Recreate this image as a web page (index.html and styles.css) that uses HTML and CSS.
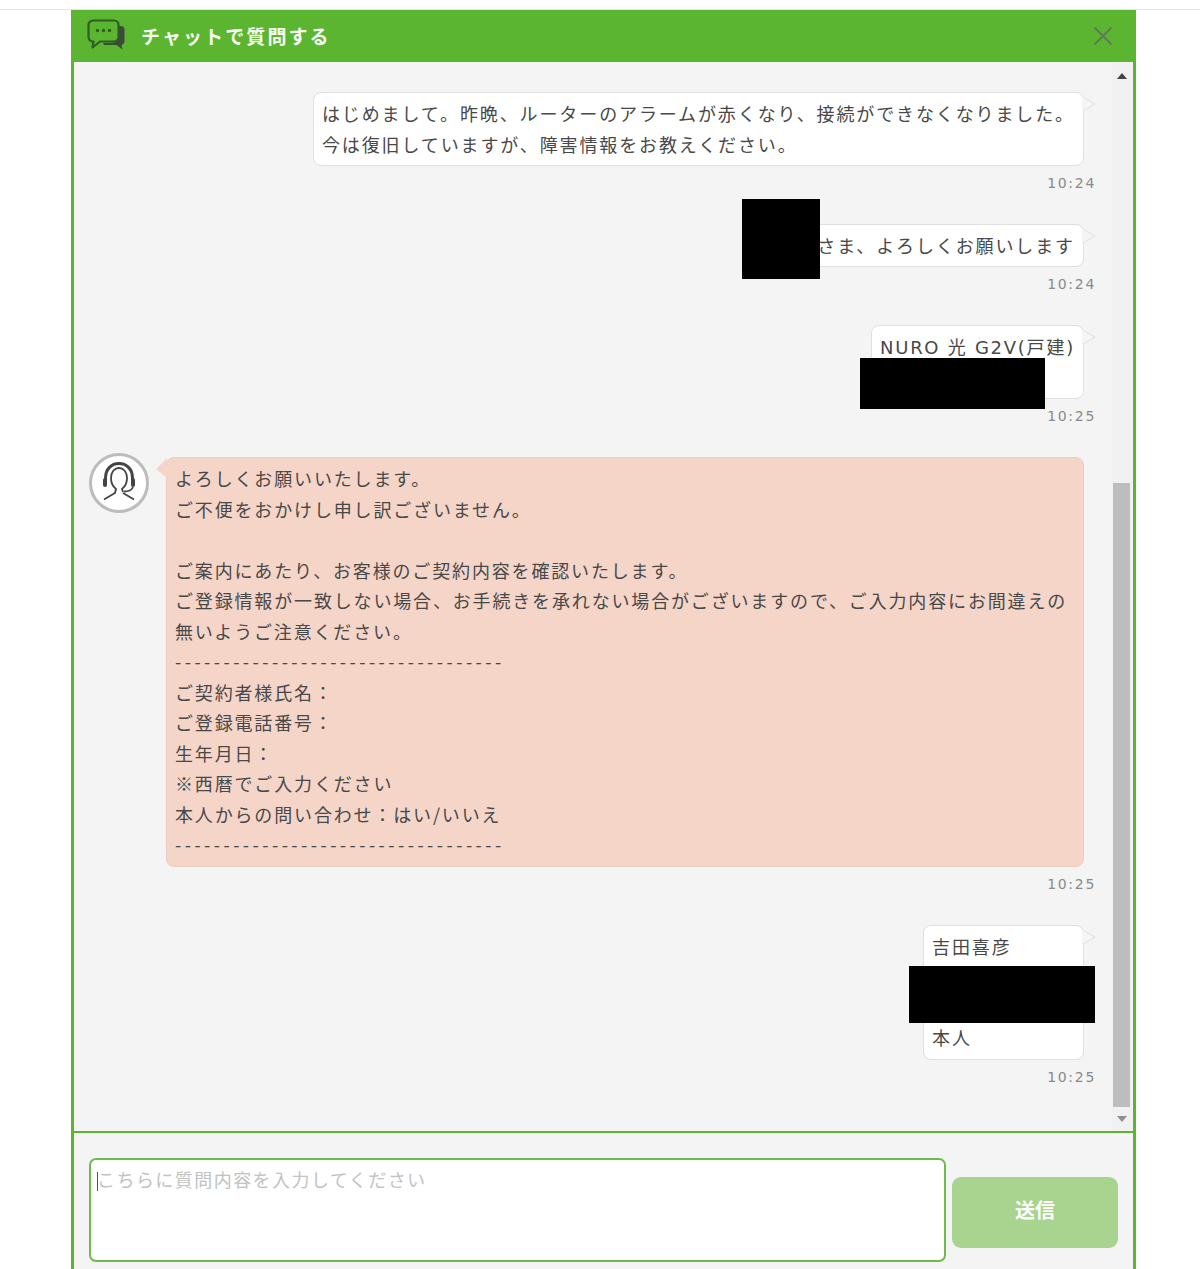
FILE: index.html
```html
<!DOCTYPE html>
<html lang="ja">
<head>
<meta charset="utf-8">
<title>チャットで質問する</title>
<link rel="stylesheet" href="styles.css">
</head>
<body>
<div class="topline"></div>
<section class="panel">
  <header class="head">
    <svg class="head-icon" viewBox="0 0 38 31" aria-hidden="true">
      <path class="chat-back" d="M27 7h6.500a4 4 0 0 1 4 4v11a4 4 0 0 1-3 3.900l1 4.600-6-4.500H17l-1-2h9a6 6 0 0 0 6-6V11a4 4 0 0 0-4-4z"/>
      <path class="chat-front" d="M6 1.500h21a4.500 4.500 0 0 1 4.500 4.500v12a4.500 4.500 0 0 1-4.500 4.500H13l-7.500 6 1-6H6A4.500 4.500 0 0 1 1.500 18V6A4.500 4.500 0 0 1 6 1.500z"/>
      <circle class="chat-dot" cx="10.500" cy="11.500" r="1.700"/>
      <circle class="chat-dot" cx="16.500" cy="11.500" r="1.700"/>
      <circle class="chat-dot" cx="22.500" cy="11.500" r="1.700"/>
    </svg>
    <h1 class="head-title">チャットで質問する</h1>
    <svg class="head-close" viewBox="0 0 20 20" aria-hidden="true">
      <path d="M1.500 1.500l17 17M18.500 1.500l-17 17"/>
    </svg>
  </header>
  <div class="main">
    <div class="chat">
      <div class="msgs">
        <div class="msg">
          <div class="bubble user">はじめまして。昨晩、ルーターのアラームが赤くなり、接続ができなくなりました。<br>今は復旧していますが、障害情報をお教えください。</div>
          <div class="time">10:24</div>
        </div>
        <div class="msg">
          <div class="bubble user bubble-name">さま、よろしくお願いします<span class="redact redact-name"></span></div>
          <div class="time">10:24</div>
        </div>
        <div class="msg">
          <div class="bubble user"><span class="latin">NURO </span>光<span class="latin"> G2V(</span>戸建<span class="latin">)</span><br>&nbsp;<span class="redact redact-plan"></span></div>
          <div class="time">10:25</div>
        </div>
        <div class="msg agent">
          <div class="agent-row">
            <div class="avatar">
              <svg viewBox="0 0 54 54" aria-hidden="true">
                <path class="av-thin" d="M19 22c0-6 3.500-10 8-10s8 4 8 10c0 5-2.500 9-5 11l1 3 M19 22c0 5 2.500 9 5 11l-1 4-11 6.500 M31 37l11 6.500"/>
                <path class="av-thick" d="M13.500 26v-4c0-9 6-14.500 13.500-14.500S40.500 13 40.500 22v4"/>
                <rect class="av-fill" x="11" y="22" width="4" height="9" rx="2"/>
                <rect class="av-fill" x="39" y="22" width="4" height="9" rx="2"/>
                <path class="av-thin" d="M41 31c-1 3-4 4.500-9 4.500"/>
              </svg>
            </div>
            <div class="bubble operator">よろしくお願いいたします。<br>ご不便をおかけし申し訳ございません。<br><br>ご案内にあたり、お客様のご契約内容を確認いたします。<br>ご登録情報が一致しない場合、お手続きを承れない場合がございますので、ご入力内容にお間違えの<br>無いようご注意ください。<br><span class="rule">----------------------------------</span><br>ご契約者様氏名：<br>ご登録電話番号：<br>生年月日：<br>※西暦でご入力ください<br>本人からの問い合わせ：はい/いいえ<br><span class="rule">----------------------------------</span></div>
          </div>
          <div class="time">10:25</div>
        </div>
        <div class="msg">
          <div class="bubble user bubble-form">吉田喜彦<br>&nbsp;<br>&nbsp;<br>本人<span class="redact redact-form"></span></div>
          <div class="time">10:25</div>
        </div>
      </div>
      <div class="scrollbar">
        <span class="arrow-up"></span>
        <span class="thumb"></span>
        <span class="arrow-down"></span>
      </div>
    </div>
    <div class="composer">
      <div class="input"><span class="caret"></span>こちらに質問内容を入力してください</div>
      <div class="send">送信</div>
    </div>
  </div>
</section>
</body>
</html>
```
FILE: styles.css
```css
* { box-sizing: border-box; }
html, body { margin: 0; height: 1269px; overflow: hidden; background: #fff; }
body {
  font-family: "Noto Sans CJK JP", "Noto Sans", sans-serif;
  color: #484848;
}
.topline { height: 10px; border-bottom: 1px solid #e4e4e4; }

.panel { width: 1065px; margin-left: 71px; }
.head {
  height: 52px;
  background: #5cb531;
  display: flex;
  align-items: center;
  padding: 0 23px 0 16px;
}
.head-icon { width: 38px; height: 31px; margin-top: -3px; flex: none; }
.chat-back { fill: #3c4a38; }
.chat-front { fill: #5cb531; stroke: #2f5c28; stroke-width: 2.200; stroke-linejoin: round; }
.chat-dot { fill: #2f5c28; }
.head-title {
  margin: 0 0 0 16px;
  flex: 1;
  font-size: 19px;
  line-height: 52px;
  font-weight: 700;
  letter-spacing: 2.100px;
  color: #f6fbef;
}
.head-close { width: 20px; height: 20px; flex: none; margin-top: -1px; }
.head-close path { fill: none; stroke: #5f7a55; stroke-width: 2; }

.main {
  height: 1207px;
  background: #f4f4f4;
  border-left: 3px solid #5cb531;
  border-right: 3px solid #5cb531;
}
.chat { display: flex; height: 1069px; }
.msgs { flex: 1; min-width: 0; padding: 30px 17px 0 15px; }
.msg { display: flex; flex-direction: column; align-items: flex-end; margin-bottom: 31.900px; }

.bubble {
  position: relative;
  font-size: 18px;
  line-height: 30.500px;
  letter-spacing: 1.880px;
  border-radius: 8px;
  padding: 5px 8px 6px;
  margin-right: 11px;
  white-space: nowrap;
}
.latin { font-family: "DejaVu Sans", sans-serif; line-height: 1; letter-spacing: 1.700px; }
.rule { letter-spacing: 3.450px; }
.user { background: #fff; border: 1px solid #e0e0e0; }
.user::before, .user::after {
  content: "";
  position: absolute;
  top: 4px;
  width: 0;
  height: 0;
  border-style: solid;
  border-color: transparent;
  border-width: 7px 0 7px 12px;
}
.user::before { right: -13px; border-left-color: #e2e2e2; }
.user::after { right: -11px; border-left-color: #f5f5f6; }
.bubble-name { width: 304px; text-align: right; }
.bubble-form { width: 161px; }

.operator {
  flex: 1;
  background: #f5d5c8;
  border: 1px solid #ebcdc0;
  letter-spacing: 1.840px;
}
.operator::before {
  content: "";
  position: absolute;
  left: -11px;
  top: 0;
  width: 0;
  height: 0;
  border-style: solid;
  border-color: transparent #f5d5c8 transparent transparent;
  border-width: 11px 11px 9px 0;
}
.agent { align-items: stretch; }
.agent .time { align-self: flex-end; }
.agent-row { display: flex; align-items: flex-start; }
.avatar {
  width: 60px;
  height: 60px;
  margin: -4px 17px 0 0;
  flex: none;
  border-radius: 50%;
  border: 3px solid #bcbcbc;
  background: #fff;
}
.avatar svg { display: block; width: 54px; height: 54px; }
.av-thin { fill: none; stroke: #444; stroke-width: 1.800; }
.av-thick { fill: none; stroke: #444; stroke-width: 3; }
.av-fill { fill: #444; }

.time {
  margin-top: 8px;
  margin-right: -1px;
  height: 18px;
  font-family: "DejaVu Sans", sans-serif;
  font-size: 14px;
  line-height: 18px;
  letter-spacing: 1.700px;
  color: #8a8a8a;
}

.redact { position: absolute; background: #000; z-index: 2; }
.redact-name { top: -26px; right: 263px; width: 78px; height: 80px; }
.redact-plan { top: 32px; right: 38px; width: 185px; height: 51px; }
.redact-form { top: 40px; right: -12px; width: 186px; height: 57px; }

.scrollbar {
  width: 21px;
  flex: none;
  background: #f1f1f1;
  display: flex;
  flex-direction: column;
  align-items: center;
  padding: 11px 2px 9px 0;
}
.arrow-up, .arrow-down {
  width: 0;
  height: 0;
  border-style: solid;
  border-color: transparent;
}
.arrow-up { border-width: 0 5px 6px; border-bottom-color: #444; }
.arrow-down { border-width: 6px 5px 0; border-top-color: #8f8f8f; margin-top: 9px; }
.thumb { width: 17px; height: 624px; margin-top: auto; background: #bdbdbd; }

.composer {
  display: flex;
  align-items: flex-start;
  gap: 6px;
  padding: 25px 15px 0 15px;
  border-top: 2px solid #5cb531;
}
.input {
  position: relative;
  width: 858px;
  height: 104px;
  background: #fff;
  border: 2px solid #6dbb4c;
  border-radius: 7px;
  padding: 4px 6px;
  font-size: 18px;
  line-height: 30px;
  letter-spacing: 1.450px;
  color: #c2c2c2;
}
.caret { position: absolute; left: 6px; top: 12px; width: 1px; height: 19px; background: #555; }
.send {
  width: 166px;
  height: 71px;
  margin-top: 19px;
  border-radius: 9px;
  background: #a8d48f;
  color: #fff;
  font-size: 20px;
  font-weight: 700;
  line-height: 66px;
  text-align: center;
}
```
